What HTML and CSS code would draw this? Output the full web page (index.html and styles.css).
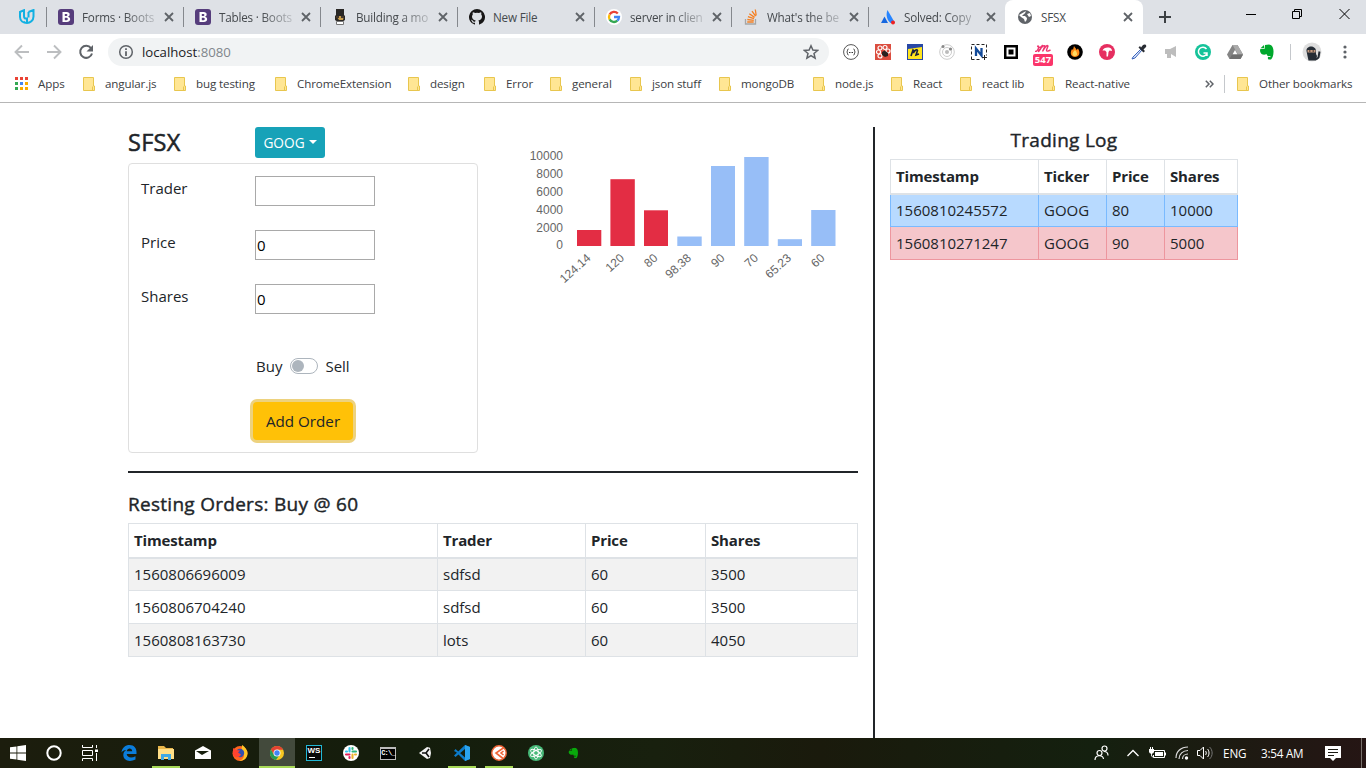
FILE: index.html
```html
<!DOCTYPE html>
<html lang="en">
<head>
<meta charset="utf-8">
<title>SFSX</title>
<link rel="stylesheet" href="styles.css">
</head>
<body>
<svg class="defs" width="0" height="0" aria-hidden="true">
  <symbol id="close" viewBox="0 0 10 10"><path d="M1 1L9 9M9 1L1 9" stroke="#5f6368" stroke-width="1.8"/></symbol>
  <symbol id="folder" viewBox="0 0 12 14"><path d="M.5.5h10V9h1v4.500H.5z" fill="#ffe694" stroke="#e8c64e"/><path d="M9.500 13V9.500" stroke="#e8c64e"/></symbol>
  <symbol id="boot" viewBox="0 0 16 16"><rect width="16" height="16" rx="3" fill="#563d7c"/><path d="M4.500 3h4.300c3.600 0 3.600 4 1.200 4.700 3.200.6 3 5.300-1.200 5.300H4.500zM6.800 5v2h1.700c1.200 0 1.200-2 0-2zm0 3.700v2.500h1.900c1.500 0 1.500-2.500 0-2.500z" fill="#fff" fill-rule="evenodd"/></symbol>
  <symbol id="elephant" viewBox="0 0 16 16"><path d="M6 1l4-.5c3 .3 4.700 3 4.500 7.500-.1 3-.7 6-2.500 7.500H9.500c-1.200-.8-.8-3 .7-2.700l1 .5.3-1.300H9.500C8 12 8 11 7.500 10c-2 1.200-5 .8-6-1.500C.8 7 1 5.500 1.500 5H5.500zM5 1L1.500 4.300H5z"/></symbol>
</svg>
<div class="screen">
  <header class="tabs">
    <div class="tab pinned"><svg width="18" height="16" viewBox="0 0 18 16"><path d="M6 1.200L2 3v5c0 4 3.500 6 7 6V9.500C6.500 10 6 8.500 6 7zM10.500 3l5-2v6.500c0 4-3.500 6.500-6.500 6.500-2.500 0-3.500-1.500-3.500-1.500M10.500 3v5.500" fill="none" stroke="#12b0e2" stroke-width="2"/></svg></div>
    <div class="tab"><svg class="fav"><use href="#boot"/></svg><span>Forms · Boots</span><svg class="x"><use href="#close"/></svg></div>
    <div class="tab"><svg class="fav"><use href="#boot"/></svg><span>Tables · Boots</span><svg class="x"><use href="#close"/></svg></div>
    <div class="tab"><svg class="fav" viewBox="0 0 16 16"><path d="M4 0h8v6l1 1v4l-3 2H6l-3-2V7l1-1z" fill="#292725"/><path d="M4 7h8l-1 4H7z" fill="#c99d4c"/><path d="M4 7h3v2H4zm5 0h3v2H9z" fill="#44382c"/><path d="M4.500 12.500h7v3h-7z" fill="#fff" stroke="#777"/></svg><span>Building a mo</span><svg class="x"><use href="#close"/></svg></div>
    <div class="tab"><svg class="fav" viewBox="0 0 16 16"><path d="M8 0a8 8 0 0 0-2.500 15.600c.4.100.5-.2.500-.4v-1.500c-2 .5-2.600-.6-2.900-1.300-.2-.5-.6-.9-.9-1.200-.4-.2-.1-.4.200-.4.700.1 1 .5 1.400 1 .6 1.100 1.800 1 2.400.7.100-.5.300-.9.500-1.100-2.200-.3-3.700-1.400-3.700-3.900 0-.9.400-1.600.8-2.100-.3-.8-.1-1.700.1-2.200.8 0 1.600.5 2.200.9a7 7 0 0 1 3.900 0c.7-.5 1.500-.9 2.100-.9.300.8.300 1.500.1 2.200.5.600.8 1.300.8 2.100 0 2.500-1.500 3.600-3.700 3.900.4.400.7.900.7 1.600v2.200c0 .3.100.5.500.4A8 8 0 0 0 8 0z" fill="#181717"/></svg><span class="full">New File</span><svg class="x"><use href="#close"/></svg></div>
    <div class="tab"><svg class="fav" viewBox="0 0 16 16"><circle cx="8" cy="8" r="8" fill="#fff"/><g fill="none" stroke-width="2.300"><path d="M11.800 4.500A5 5 0 0 0 3.600 5.600" stroke="#ea4335"/><path d="M3.600 5.600a5 5 0 0 0 0 4.800" stroke="#fbbc05"/><path d="M3.600 10.400a5 5 0 0 0 7.700 1.300" stroke="#34a853"/><path d="M11.300 11.700A5 5 0 0 0 13 8H8" stroke="#4285f4"/></g></svg><span>server in clien</span><svg class="x"><use href="#close"/></svg></div>
    <div class="tab"><svg class="fav" viewBox="0 0 16 16"><path d="M2.500 10v5h10v-5" fill="none" stroke="#a6a6a6" stroke-width="1.300"/><path d="M4.200 13h6.500M4.300 10.500l6.500.8M4.900 7.700l6.100 2M6.300 4.700l5.300 3.700M9 2.200l3.600 5M12.300.5l.9 6" stroke="#f48024" stroke-width="1.300"/></svg><span>What's the be</span><svg class="x"><use href="#close"/></svg></div>
    <div class="tab last"><svg class="fav" viewBox="0 0 16 16"><path d="M4.500 7.500L8 14H1z" fill="#1667df"/><path d="M7.500 1L15 14h-4.500C7 11 5.500 6 7.500 1z" fill="#2684ff"/><circle cx="13" cy="13.500" r="2" fill="#e22"/></svg><span>Solved: Copy</span><svg class="x"><use href="#close"/></svg></div>
    <div class="tab active"><svg class="fav" viewBox="0 0 16 16"><circle cx="8" cy="8" r="7" fill="#5f6368"/><path d="M9 2c-1 1 0 2-2 3L5 7h3l2 2c0 2-1 3-2 4l-1-3-3-2-2-2M10 5l3-1 1 3-2 1z" fill="#fff"/></svg><span class="full">SFSX</span><svg class="x"><use href="#close"/></svg></div>
    <svg class="newtab" width="12" height="12" viewBox="0 0 12 12"><path d="M6 0v12M0 6h12" stroke="#3c4043" stroke-width="2"/></svg>
    <div class="winctl">
      <svg width="10" height="12"><path d="M0 6.500h10" stroke="#000"/></svg>
      <svg width="11" height="12"><path d="M.5 3.500h7v7h-7zM2.500 3.500v-2h7v7h-2" fill="none" stroke="#000"/></svg>
      <svg width="11" height="12"><path d="M.5 1L10.500 11M10.500 1L.5 11" stroke="#000"/></svg>
    </div>
  </header>

  <div class="toolbar">
    <svg class="nav" viewBox="0 0 16 16"><path d="M15 8H2M8 1.500L1.500 8 8 14.500" stroke="#bcbec0" stroke-width="1.900" fill="none"/></svg>
    <svg class="nav" viewBox="0 0 16 16"><path d="M1 8h13M8 1.500L14.500 8 8 14.500" stroke="#bcbec0" stroke-width="1.900" fill="none"/></svg>
    <svg class="nav" viewBox="0 0 16 16"><path d="M13 4.200A6 6 0 1 0 14 9.500" stroke="#5f6368" stroke-width="2" fill="none"/><path d="M15 1v6.500H8.500z" fill="#5f6368"/></svg>
    <div class="omnibox">
      <svg width="16" height="16" viewBox="0 0 16 16"><circle cx="8" cy="8" r="6.300" fill="none" stroke="#5f6368" stroke-width="1.500"/><path d="M8 7.300V12M8 4.300v1.700" stroke="#5f6368" stroke-width="1.800"/></svg>
      <span class="url">localhost<i>:8080</i></span>
      <svg class="star" width="16" height="16" viewBox="0 0 16 16"><path d="M8 1.800l1.900 4.300 4.700.4-3.600 3 1.100 4.600L8 11.700l-4.100 2.400L5 9.500l-3.600-3 4.700-.4z" fill="none" stroke="#5f6368" stroke-width="1.500"/></svg>
    </div>
    <div class="exts">
      <svg viewBox="0 0 16 16"><circle cx="8" cy="8" r="7.400" fill="#fff" stroke="#555"/><path d="M5.500 5c-1.500 0-.5 2.500-1.800 3 1.300.5.300 3 1.800 3M10.500 5c1.500 0 .5 2.500 1.800 3-1.300.5-.3 3-1.800 3M6 8.500h1m.5 0h1m.5 0h1" fill="none" stroke="#333"/></svg>
      <svg viewBox="0 0 16 16"><rect width="16" height="16" fill="#db4d3f"/><g fill="none" stroke="#fff" stroke-width="1.200"><circle cx="5" cy="4" r="2"/><circle cx="10" cy="3.500" r="2"/><circle cx="3.500" cy="8" r="2"/><circle cx="13" cy="7" r="2"/><circle cx="5" cy="12" r="2"/></g><path d="M7 8l2.500-1.500L13 9v3l-3 1-3-2z" fill="#27201f"/></svg>
      <svg viewBox="0 0 16 16"><rect width="16" height="16" fill="#2848a5"/><path d="M1 5l14-2v12H1z" fill="#ffe51d"/><path d="M4 12l2-6 1 1-.7 2C8 6 10 5 10.500 6.500L9 11l3-1" stroke="#19213c" stroke-width="1.600" fill="none"/></svg>
      <svg viewBox="0 0 16 16"><g fill="none" stroke="#ccc"><circle cx="8" cy="8" r="7.300"/><circle cx="8" cy="8" r="4.500"/></g><circle cx="8" cy="8" r="2" fill="#bbb"/><circle cx="4" cy="2.500" r="1.500" fill="#888"/><circle cx="11.500" cy="5" r="1.600" fill="#888"/></svg>
      <svg viewBox="0 0 16 16"><path d="M.5 15.500V.5h15v11M.5 15.500h10" fill="none" stroke="#222" stroke-dasharray="3 2"/><path d="M5 12V4.500L10.500 11.500V4" stroke="#124a99" stroke-width="2.300" fill="none"/><path d="M13.500 11v5M11 13.500h5" stroke="#222"/></svg>
      <svg viewBox="0 0 16 16"><rect x="1" y="1" width="14" height="14"/><rect x="4.500" y="4.500" width="7" height="7" stroke="#fff" stroke-width="2"/></svg>
      <div class="badgewrap"><svg viewBox="0 0 16 16"><path d="M0 7c2 2 5-5 3-5C1.500 2 5 5 7 2 9-1 4 8 3.500 7.500S9 0 10 2L7.500 7.500C9 5 12 0 13 2l-1.500 4c0 2 2 1 4 0" fill="none" stroke="#ef3670" stroke-width="1.400"/></svg><b>547</b></div>
      <svg viewBox="0 0 16 16"><circle cx="8" cy="8" r="7.800"/><path d="M7 2c1 2 2 2 2.500 4L11 4.500C14 9 12 13 8 13S2.500 9 5 5l1 1z" fill="#ff8c19"/><path d="M8 6c3 3 2.500 6 0 6s-3.500-2-1-5z" fill="#ffdb61"/></svg>
      <svg viewBox="0 0 16 16"><circle cx="8" cy="8" r="8" fill="#e62e60"/><path d="M3.500 6.500c1-3 6.500-4 9-1.500l.5 2-2.500-.5-1 1.500L9 12.500H7.500V8L6 6.500z" fill="#fff"/></svg>
      <svg viewBox="0 0 16 16"><path d="M10 5L2 13l-1 2 3-1 7-8" fill="#dfe8fa" stroke="#3862bd"/><path d="M7.500 3.500l5 5 1.500-1.500-1.500-1.500L15 3c1-2-1-3.500-3-2L10 3.500 9 2z" fill="#292c33"/></svg>
      <svg viewBox="0 0 16 16"><path d="M2 5h5l6-3v11l-5-3v4H4v-4H2z" fill="#bdbdbd"/></svg>
      <svg viewBox="0 0 16 16"><circle cx="8" cy="8" r="8" fill="#15c39a"/><path d="M11.500 5A4.500 4.500 0 1 0 12 9.500M8.500 9H12v3" fill="none" stroke="#fff" stroke-width="1.500"/></svg>
      <svg viewBox="0 0 16 16"><path d="M5.500 1h5L16 10.500 13.500 15h-11L0 10.500z" fill="#858585"/><path d="M5.500 1h5L16 10.500h-5z" fill="#aaa"/><path d="M8 6l2.500 4.500h-5z" fill="#fff"/><path d="M5 10.500h11L13.500 15h-11z" fill="#707070"/></svg>
      <svg viewBox="0 0 16 16"><use href="#elephant" fill="#00a82d"/></svg>
    </div>
    <svg class="avatar" viewBox="0 0 20 20"><circle cx="10" cy="10" r="9.500" fill="#dedede"/><path d="M4.500 9c-.5-6 9.500-6 9.500 0v3l1 2-1 4.500H6.500L5.500 14z" fill="#252c35"/><path d="M5.500 8h8v2.500h-8z" fill="#c49a80"/><path d="M7 9h1.500m2 0H12" stroke="#111"/><path d="M14 17.500l2.500-2 1-6" fill="none" stroke="#252c35" stroke-width="2"/></svg>
    <svg class="menu" width="4" height="14"><g fill="#5f6368"><circle cx="2" cy="2" r="1.600"/><circle cx="2" cy="7" r="1.600"/><circle cx="2" cy="12" r="1.600"/></g></svg>
  </div>

  <nav class="bookmarks">
    <a class="apps"><svg width="13" height="13" viewBox="0 0 13 13"><path d="M0 0h3v3H0zM5 0h3v3H5zM10 0h3v3h-3z" fill="#ea4335"/><path d="M0 5h3v3H0zM0 10h3v3H0z" fill="#34a853"/><path d="M5 5h3v3H5z" fill="#4285f4"/><path d="M10 5h3v3h-3zM5 10h3v3H5zM10 10h3v3h-3z" fill="#f9ab00"/></svg>Apps</a>
    <a><svg class="fold"><use href="#folder"/></svg>angular.js</a>
    <a><svg class="fold"><use href="#folder"/></svg>bug testing</a>
    <a><svg class="fold"><use href="#folder"/></svg>ChromeExtension</a>
    <a><svg class="fold"><use href="#folder"/></svg>design</a>
    <a><svg class="fold"><use href="#folder"/></svg>Error</a>
    <a><svg class="fold"><use href="#folder"/></svg>general</a>
    <a><svg class="fold"><use href="#folder"/></svg>json stuff</a>
    <a><svg class="fold"><use href="#folder"/></svg>mongoDB</a>
    <a><svg class="fold"><use href="#folder"/></svg>node.js</a>
    <a><svg class="fold"><use href="#folder"/></svg>React</a>
    <a><svg class="fold"><use href="#folder"/></svg>react lib</a>
    <a><svg class="fold"><use href="#folder"/></svg>React-native</a>
    <svg class="more" width="9" height="8" viewBox="0 0 9 8"><path d="M.8.8L4 4 .8 7.200M4.800.8L8 4 4.800 7.200" fill="none" stroke="#5f6368" stroke-width="1.500"/></svg>
    <a class="other"><svg class="fold"><use href="#folder"/></svg>Other bookmarks</a>
  </nav>

  <main class="page">
    <section class="left">
      <div class="top">
        <div class="order">
          <div class="head"><h1>SFSX</h1><button class="ticker">GOOG<em></em></button></div>
          <form class="card">
            <div class="row"><label>Trader</label><input type="text"></div>
            <div class="row"><label>Price</label><input type="text" value="0"></div>
            <div class="row"><label>Shares</label><input type="text" value="0"></div>
            <div class="side"><span>Buy</span><div class="switch"></div><span>Sell</span></div>
            <button type="button" class="add">Add Order</button>
          </form>
        </div>
        <svg class="chart" width="330" height="170" viewBox="520 127 330 170">
          <g class="ticks"><text x="563" y="160">10000</text><text x="563" y="178">8000</text><text x="563" y="196">6000</text><text x="563" y="214">4000</text><text x="563" y="232">2000</text><text x="563" y="249">0</text></g>
          <g fill="#e32d44"><rect x="577" y="230" width="24.300" height="16"/><rect x="610.400" y="179.200" width="24.400" height="66.800"/><rect x="644" y="210.300" width="24" height="35.700"/></g>
          <g fill="#97bef7"><rect x="677.300" y="236.500" width="24.400" height="9.500"/><rect x="711" y="166" width="24" height="80"/><rect x="744.200" y="157" width="24.400" height="89"/><rect x="777.800" y="239.200" width="24.200" height="6.800"/><rect x="811.200" y="210" width="24.300" height="36"/></g>
          <g class="labels"><text transform="translate(591.500 259) rotate(-42)">124.14</text><text transform="translate(625 259) rotate(-42)">120</text><text transform="translate(658.500 259) rotate(-42)">80</text><text transform="translate(692 259) rotate(-42)">98.38</text><text transform="translate(725.500 259) rotate(-42)">90</text><text transform="translate(759 259) rotate(-42)">70</text><text transform="translate(792 259) rotate(-42)">65.23</text><text transform="translate(825.500 259) rotate(-42)">60</text></g>
        </svg>
      </div>
      <div class="rule"></div>
      <h2>Resting Orders: Buy @ 60</h2>
      <table class="resting">
        <colgroup><col class="r1"><col class="r2"><col class="r3"><col class="r4"></colgroup>
        <thead><tr><th>Timestamp</th><th>Trader</th><th>Price</th><th>Shares</th></tr></thead>
        <tbody>
          <tr><td>1560806696009</td><td>sdfsd</td><td>60</td><td>3500</td></tr>
          <tr><td>1560806704240</td><td>sdfsd</td><td>60</td><td>3500</td></tr>
          <tr><td>1560808163730</td><td>lots</td><td>60</td><td>4050</td></tr>
        </tbody>
      </table>
    </section>
    <section class="log">
      <h2>Trading Log</h2>
      <table>
        <colgroup><col class="l1"><col class="l2"><col class="l3"><col class="l4"></colgroup>
        <thead><tr><th>Timestamp</th><th>Ticker</th><th>Price</th><th>Shares</th></tr></thead>
        <tbody>
          <tr class="buy"><td>1560810245572</td><td>GOOG</td><td>80</td><td>10000</td></tr>
          <tr class="sell"><td>1560810271247</td><td>GOOG</td><td>90</td><td>5000</td></tr>
        </tbody>
      </table>
    </section>
  </main>

  <footer class="taskbar">
    <div class="start">
      <div><svg viewBox="0 0 16 16"><path d="M0 2.300L6.500 1.400v6.200H0zM7.300 1.300L16 0v7.600H7.300zM0 8.400h6.500v6.200L0 13.700zM7.300 8.400H16V16l-8.700-1.300z" fill="#fff"/></svg></div>
      <div><svg viewBox="0 0 16 16"><circle cx="8" cy="8" r="6.700" fill="none" stroke="#fff" stroke-width="2"/></svg></div>
      <div><svg viewBox="0 0 16 16"><path d="M.5 0v2.500h10V0M.5 5.500h10v5H.5zM.5 16v-2.500h10V16M14.500 0v3m0 5v8" fill="none" stroke="#fff"/><path d="M13 4.500h3v2.500h-3z" fill="#fff"/></svg></div>
    </div>
    <div class="tasks">
      <div><svg viewBox="0 0 16 16"><path d="M.5 7.500C1 2.500 4.500 0 8.500 0c4.800 0 7 3.500 7 7v2H5.700c.3 3.800 5 4.300 8.800 2.200v3.300C8.500 17.500 2.300 15.500 2.300 10c0-2.200 1-4 3-5C2.800 5 1.500 6 .5 7.500zM5.800 6.300h5.400c0-3.600-5-3.600-5.400 0z" fill="#0b7ddb"/></svg></div>
      <div class="open"><svg viewBox="0 0 16 16"><path d="M0 1h6l2 2h7v3H0z" fill="#e8b64a"/><path d="M0 4h16v10H0z" fill="#ffdf87"/><path d="M3 9h10v6h-3v-3H6v3H3z" fill="#3fa9e5"/></svg></div>
      <div><svg viewBox="0 0 16 16"><path d="M0 5.500L8 1l8 4.500V14H0z" fill="#fff"/><path d="M1 6h13L7 10z" fill="#18200e"/></svg></div>
      <div><svg viewBox="0 0 16 16"><circle cx="8" cy="8.500" r="7.500" fill="#ff641f"/><path d="M10 0c2 1 6 5 5.500 9-.5 5-5 7-8 7 5-2 6-7 2-10z" fill="#ffc527"/><circle cx="8" cy="8" r="4.200" fill="#334fb2"/><path d="M1 3l3 2 4 .5-2 2 3 2c-2 4-7 3-8 0z" fill="#ff4330"/></svg></div>
      <div class="current"><svg viewBox="0 0 16 16"><circle cx="8" cy="8" r="7" fill="#f7c721"/><path d="M1.900 4.500a7 7 0 0 1 12.300.2H8L5 10z" fill="#e34133"/><path d="M1.900 4.500A7 7 0 0 0 7 15l3.500-5H5z" fill="#269b55"/><circle cx="8" cy="8" r="3.500" fill="#fff"/><circle cx="8" cy="8" r="2.700" fill="#4285f4"/></svg></div>
      <div><div class="ws">WS</div></div>
      <div><svg viewBox="0 0 16 16"><circle cx="8" cy="8" r="8" fill="#fff"/><g stroke-width="2.100" stroke-linecap="round"><path d="M6.500 3v3.500M3 6.500h1" stroke="#36c5f0"/><path d="M9.500 6.500H13M9.500 3v1" stroke="#2eb67d"/><path d="M9.500 9.500V13M12 9.500h1" stroke="#ecb22e"/><path d="M3 9.500h3.500M6.500 12v1" stroke="#e01e5a"/></g></svg></div>
      <div><div class="cmd">C:\_</div></div>
      <div><svg viewBox="0 0 16 16"><path d="M2 8l8-6 3 .8L14 8l-1 5-3 1z" fill="#f3f3f3"/><path d="M5 8h4l3-4M9 8l3 4" fill="none" stroke="#111" stroke-width="1.600"/></svg></div>
      <div class="open"><svg viewBox="0 0 16 16"><path d="M11 0l5 2v12l-5 2-9-9-2-1 1.500-2L11 12.500V4L1.500 12 0 10.500z" fill="#0c7bc9"/><path d="M11 0l5 2v12l-5 2z" fill="#2aa3ee"/></svg></div>
      <div class="open"><svg viewBox="0 0 16 16"><circle cx="8" cy="8" r="7.200" fill="#fff" stroke="#ef6538" stroke-width="1.500"/><path d="M13 2.500L5 8l7 5.500M12.500 6L10 8l2.500 2" fill="none" stroke="#ef6538" stroke-width="1.600"/></svg></div>
      <div><svg viewBox="0 0 16 16"><circle cx="8" cy="8" r="8" fill="#47b978"/><g fill="none" stroke="#fff" stroke-width=".9"><ellipse cx="8" cy="8" rx="2.300" ry="6"/><ellipse cx="8" cy="8" rx="2.300" ry="6" transform="rotate(60 8 8)"/><ellipse cx="8" cy="8" rx="2.300" ry="6" transform="rotate(120 8 8)"/></g></svg></div>
      <div><svg class="ever" viewBox="0 0 16 16"><use href="#elephant" fill="#08a80b"/></svg></div>
    </div>
    <div class="tray">
      <svg width="16" height="16" viewBox="0 0 16 16"><g fill="none" stroke="#fff" stroke-width="1.200"><circle cx="10.500" cy="3.500" r="2.500"/><circle cx="5.500" cy="8" r="2.500"/><path d="M1 15c0-5.500 8-5.500 8.500-1M10 6.500c2.500 0 4 1 4 4"/></g></svg>
      <svg class="up" width="12" height="8" viewBox="0 0 12 8"><path d="M.5 7L6 1.500 11.500 7" fill="none" stroke="#fff" stroke-width="1.300"/></svg>
      <svg class="bat" width="17" height="14" viewBox="0 0 17 14"><path d="M5 4.500h10.500v7H4.500V9" fill="none" stroke="#fff"/><path d="M6 6h8v4H6zM16 6.500h1v3h-1zM0 3h5v3L4 7.500H1L0 6z" fill="#fff"/><path d="M1.500 1v2m2-2v2m-1 4c0 3 0 4 2 4" stroke="#fff" fill="none"/></svg>
      <svg class="wifi" width="14" height="14" viewBox="0 0 14 14"><g fill="none" stroke="#ddd" stroke-width="1.200"><path d="M1 12C1 5.500 6 1 13 1M4 13c0-5 4-8.500 9-8.500M7.500 13c0-3 2.500-5 5.500-5"/></g><circle cx="11.500" cy="12" r="1.700" fill="#fff"/></svg>
      <svg class="vol" width="16" height="14" viewBox="0 0 16 14"><path d="M.5 4.500H3L6.500 1v12L3 9.500H.5z" fill="none" stroke="#fff"/><path d="M8.500 5c1 1 1 3 0 4M10.500 3c2 2 2 6 0 8" fill="none" stroke="#fff"/><path d="M12.500 1c3.500 3 3.500 9 0 12" fill="none" stroke="#777"/></svg>
      <span class="lang">ENG</span><span class="time">3:54 AM</span>
      <svg class="note" width="16" height="17" viewBox="0 0 16 17"><path d="M0 1h16v12h-5l-3 3-3-3H0z" fill="#fff"/><path d="M3 4.500h10M3 7.500h10M3 10.500h6" stroke="#1c1a13"/></svg>
      <div class="desk"></div>
    </div>
  </footer>
</div>
</body>
</html>
```
FILE: styles.css
```css
* { box-sizing: border-box; }
body { margin: 0; background: #fff; color: #212529; font-family: "Open Sans", "Noto Sans", sans-serif; font-size: 15px; overflow: hidden; }
svg { display: block; flex: none; }
.defs { position: absolute; }
.screen { width: 1366px; height: 768px; display: flex; flex-direction: column; }

.tabs { height: 34px; flex: none; background: #dee1e6; display: flex; align-items: stretch; color: #45494d; font-size: 11.700px; }
.tab { width: 137px; display: flex; align-items: center; padding: 0 10px 0 11px; position: relative; flex: none; }
.tab::after { content: ""; position: absolute; right: 0; top: 7px; width: 1px; height: 20px; background: #85888d; }
.tab.pinned { width: 47px; padding: 0 0 0 18px; }
.tab.last::after, .tab.active::after { display: none; }
.tab.active { width: 138px; margin-left: -1px; padding-left: 12px; background: #fff; border-radius: 8px 8px 0 0; }
.fav { width: 16px; height: 16px; }
.tab span { margin-left: 8px; line-height: 18px; white-space: nowrap; letter-spacing: -.2px; -webkit-mask-image: linear-gradient(90deg, #000 42px, rgba(0,0,0,.15) 76px); mask-image: linear-gradient(90deg, #000 42px, rgba(0,0,0,.15) 76px); }
.tab span.full { -webkit-mask-image: none; mask-image: none; }
.x { width: 10px; height: 10px; margin-left: auto; }
.newtab { margin: 11px 0 0 16px; }
.winctl { margin-left: auto; display: flex; gap: 36px; padding: 8px 16px 0 0; }

.toolbar { height: 36px; flex: none; display: flex; align-items: center; padding-left: 14px; }
.nav { width: 16px; height: 16px; margin-right: 16px; }
.omnibox { width: 721px; height: 28px; margin-left: -2px; background: #f1f3f4; border-radius: 14px; display: flex; align-items: center; padding: 0 10px; }
.url { font-size: 13.200px; margin-left: 8px; line-height: 20px; color: #202124; }
.url i { font-style: normal; color: #80868b; }
.star { margin-left: auto; }
.exts { display: flex; gap: 16px; margin-left: 14px; padding-right: 15px; border-right: 1px solid #c5c8cc; height: 16px; }
.exts svg { width: 16px; height: 16px; }
.badgewrap { position: relative; width: 16px; height: 16px; }
.badgewrap b { position: absolute; left: -2px; top: 10px; width: 20px; height: 12px; background: #fb356a; border-radius: 2px; color: #fff; font: bold 9.5px/12px "Open Sans", sans-serif; text-align: center; }
.avatar { width: 20px; height: 20px; margin-left: 11px; }
.menu { margin-left: 21px; }

.bookmarks { height: 33px; flex: none; display: flex; align-items: center; padding: 0 0 5px 15px; border-bottom: 1px solid #b6b6b6; font-size: 11.600px; letter-spacing: -.12px; color: #3c4043; white-space: nowrap; }
.bookmarks a { display: flex; align-items: center; flex: none; line-height: 18px; }
.bookmarks .fold { width: 12px; height: 14px; margin-right: 10px; }
.apps { width: 68px; }
.apps svg { margin-right: 10px; }
.bookmarks a:nth-child(2) { width: 91px; }
.bookmarks a:nth-child(3) { width: 101px; }
.bookmarks a:nth-child(4) { width: 133px; }
.bookmarks a:nth-child(5) { width: 76px; }
.bookmarks a:nth-child(6) { width: 66px; }
.bookmarks a:nth-child(7) { width: 80px; }
.bookmarks a:nth-child(8) { width: 89px; }
.bookmarks a:nth-child(9) { width: 94px; }
.bookmarks a:nth-child(10) { width: 78px; }
.bookmarks a:nth-child(11) { width: 69px; }
.bookmarks a:nth-child(12) { width: 83px; }
.bookmarks a:nth-child(13) { width: 162px; }
.other { margin-left: 10px; padding-left: 12px; border-left: 1px solid #c5c8cc; }

.page { flex: 1; display: flex; padding: 24px 0 0 128px; }
.left { width: 730px; }
.top { display: flex; gap: 42px; height: 344px; }
.order { width: 350px; }
.head { display: flex; height: 36px; }
h1 { margin: 0; width: 127px; font-size: 23.500px; font-weight: 400; line-height: 31px; letter-spacing: .3px; -webkit-text-stroke: .5px #212529; }
.ticker { width: 70px; height: 31px; border: 0; border-radius: 3px; padding: 0; background: #17a2b8; color: #fff; font: 13.700px/31px "Open Sans", sans-serif; display: flex; align-items: center; justify-content: center; }
.ticker em { margin: -2px 0 0 4px; border: 4px solid transparent; border-top-color: #fff; border-bottom: 0; }
.card { height: 290px; border: 1px solid #dfdfdf; border-radius: 4px; padding: 12px; }
.row { display: flex; height: 54px; }
.row label { width: 114px; line-height: 25px; }
input { width: 120px; height: 30px; border: 1px solid #a9a9a9; border-radius: 0; padding: 1px; font: 15px "Open Sans", sans-serif; color: #000; }
.side { display: flex; align-items: center; height: 24px; margin: 16px 0 0 115px; gap: 7.500px; }
.switch { width: 28px; height: 16px; border: 1px solid #adb5bd; border-radius: 8px; padding: 1px; }
.switch::before { content: ""; display: block; width: 12px; height: 12px; border-radius: 50%; background: #adb5bd; }
.add { display: block; width: 100px; height: 38px; margin: 24px 0 0 112px; padding: 0; border: 0; border-radius: 4px; background: #ffc107; box-shadow: 0 0 0 3px #edd27e; color: #212529; font: 15.200px/38px "Open Sans", sans-serif; }
.chart { font-family: "Liberation Sans", Arial, sans-serif; font-size: 12px; fill: #666; text-anchor: end; }
.rule { height: 2px; background: #212529; }
h2 { margin: 0; font-size: 19px; font-weight: 400; line-height: 24px; letter-spacing: .28px; -webkit-text-stroke: .4px #212529; }
.left h2 { margin: 19px 0 7px; }
table { border-collapse: collapse; table-layout: fixed; width: 100%; line-height: 24px; }
th, td { border: 1px solid #dee2e6; padding: 0 5px; height: 33px; text-align: left; }
th { height: 34px; border-bottom-width: 2px; font-weight: 700; letter-spacing: -.15px; }
.resting tbody tr:nth-child(odd) { background: #f2f2f2; }
.r1 { width: 309px; } .r2 { width: 148px; } .r3 { width: 120px; } .r4 { width: 152px; }
.log { width: 365px; margin-left: 15px; border-left: 2px solid #212529; padding-left: 15px; }
.log h2 { text-align: center; margin: 1px 0 7px; }
.l1 { width: 148px; } .l2 { width: 68px; } .l3 { width: 58px; } .l4 { width: 73px; }
.buy { background: #b8daff; } .buy td { border-color: #7abaff; }
.sell { background: #f5c6cb; } .sell td { border-color: #ed969e; }
.buy td, .log thead th { border-top-color: #dee2e6; }
.sell td { border-top-color: #7abaff; }

.taskbar { height: 30px; flex: none; display: flex; background: linear-gradient(90deg, #1c1d0d, #141d0c 30%, #18200e 48%, #1a1a0c 60%, #14200f 80%, #251514); color: #fff; }
.start, .tasks { display: flex; }
.start div { width: 36px; display: flex; align-items: center; justify-content: center; }
.start svg, .tasks svg { width: 16px; height: 16px; }
.tasks { margin-left: 3px; gap: 1px; }
.tasks > div { width: 36px; height: 30px; display: flex; align-items: center; justify-content: center; position: relative; }
.tasks .current { background: #434a3c; }
.open::after, .current::after { content: ""; position: absolute; left: 4px; right: 4px; bottom: 0; height: 2px; background: #a7d957; }
.current::after { left: 0; right: 0; }
.ws { width: 16px; height: 16px; background: #090909; border: 1px solid #22b8d5; font: bold 8px/9px "Liberation Sans", sans-serif; text-align: center; }
.ws::after { content: ""; display: block; width: 6px; height: 1px; background: #fff; margin: 2px 0 0 2px; }
.cmd { width: 16px; height: 13px; background: #000; border: 1px solid #bbb; border-top-width: 2px; font: bold 7px/9px "Liberation Mono", monospace; letter-spacing: -.8px; text-align: center; }
.tasks .ever { width: 11px; height: 12px; }
.tray { display: flex; align-items: center; margin-left: auto; }
.up { margin-left: 17px; }
.bat { margin-left: 10px; }
.wifi { margin-left: 9px; }
.vol { margin-left: 8px; }
.lang, .time { font-size: 11.700px; letter-spacing: -.1px; width: 24px; margin-left: 10px; white-space: nowrap; }
.time { width: 44px; margin-left: 14px; letter-spacing: -.25px; }
.note { margin-left: 20px; }
.desk { width: 5px; height: 30px; margin-left: 20px; border-left: 1px solid #77706b; }
```
